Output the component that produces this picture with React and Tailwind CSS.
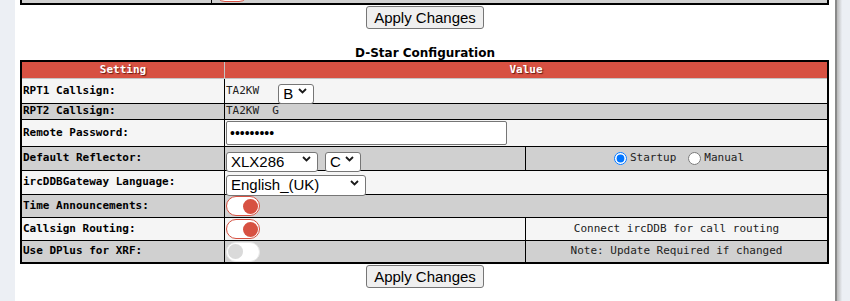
import { useState } from 'react';

const mono = "font-['DejaVu_Sans_Mono',monospace] text-[11px]";

const Chevron = () => (
  <svg width="9" height="6" viewBox="0 0 9 6" className="pointer-events-none absolute right-[7px] top-1/2 -translate-y-1/2">
    <path d="M1 1l3.5 3.5L8 1" fill="none" stroke="#1a1a1a" strokeWidth="1.8" />
  </svg>
);

const Select = ({ value, options, className }) => (
  <div className={`relative ${className}`}>
    <select
      defaultValue={value}
      className="h-full w-full appearance-none rounded-[3px] border border-[#767676] bg-white py-0 pl-[4px] font-['Liberation_Sans',sans-serif] text-[15px] leading-[18px] text-black outline-none"
    >
      {options.map((o) => (
        <option key={o}>{o}</option>
      ))}
    </select>
    <Chevron />
  </div>
);

const Toggle = ({ on }) =>
  on ? (
    <div className="ml-[1px] flex h-[20px] w-[34px] items-center justify-end rounded-full border-[1.5px] border-[#d75142] bg-white px-[1px]">
      <div className="h-[15px] w-[15px] rounded-full bg-[#d75142]" />
    </div>
  ) : (
    <div className="ml-[1px] flex h-[20px] w-[34px] items-center justify-start rounded-full border border-[#e8e8e8] bg-white px-[1px]">
      <div className="h-[15px] w-[15px] rounded-full bg-[#dadada]" />
    </div>
  );

const Row = ({ h, bg, label, children, top = true }) => (
  <div className={`flex ${h} ${bg} ${top ? 'border-t border-black' : ''}`}>
    <div className={`flex w-[202px] items-center pl-[1px] font-bold text-black ${mono}`}>{label}</div>
    <div className="flex flex-1 items-center border-l border-black">{children}</div>
  </div>
);

const ApplyButton = () => (
  <div className="flex justify-center">
    <button className="h-[23px] w-[118px] rounded-[3px] border border-[#767676] bg-[#efefef] font-['Liberation_Sans',sans-serif] text-[15px] leading-none text-black">
      Apply Changes
    </button>
  </div>
);

export default function App() {
  const [mode, setMode] = useState('startup');

  return (
    <div className="flex h-[301px] w-[850px] overflow-hidden bg-white">
      <div className="w-[15px] bg-[#eceff4]" />

      <div className="flex w-[820px] flex-col">
        {/* tail of the previous table */}
        <div className="ml-[5px] flex h-[5px] w-[809px] border-x-2 border-b-2 border-black bg-[#d0d0d0]">
          <div className="w-[189px]" />
          <div className="h-[3px] flex-1 overflow-hidden border-l border-black">
            <div className="-mt-[18px] ml-[3px] h-[20px] w-[34px] rounded-full border-[1.5px] border-[#d75142] bg-white" />
          </div>
        </div>

        <div className="mt-[1px]">
          <ApplyButton />
        </div>

        <div className="flex h-[31px] items-end justify-center">
          <span className="font-['DejaVu_Sans',sans-serif] text-[12px] font-bold leading-[14px] text-black">
            D-Star Configuration
          </span>
        </div>

        <div className="ml-[5px] w-[809px] border-2 border-black">
          <div className="flex h-[17px] border-b border-[#c4c4c4] bg-[#d75142] font-bold text-white [text-shadow:1px_1px_1px_#6b1a12]">
            <div className={`flex w-[202px] items-center justify-center ${mono}`}>Setting</div>
            <div className={`flex flex-1 items-center justify-center border-l border-[#c4c4c4] ${mono}`}>Value</div>
          </div>

          <Row h="h-[24px]" bg="bg-[#f5f5f5]" label="RPT1 Callsign:" top={false}>
            <span className={`ml-[1px] text-[#222] ${mono}`}>TA2KW</span>
            <Select value="B" options={['A', 'B', 'C', 'D', 'E']} className="ml-[19px] h-[20px] w-[36px]" />
          </Row>

          <Row h="h-[16px]" bg="bg-[#d0d0d0]" label="RPT2 Callsign:">
            <span className={`ml-[1px] whitespace-pre text-[#222] ${mono}`}>TA2KW  G</span>
          </Row>

          <Row h="h-[27px]" bg="bg-[#f5f5f5]" label="Remote Password:">
            <input
              type="password"
              defaultValue="raspberry"
              className="ml-[1px] h-[24px] w-[281px] rounded-[2px] border border-[#767676] bg-white px-[3px] font-['Liberation_Sans',sans-serif] text-[14px] text-black outline-none"
            />
          </Row>

          <Row h="h-[24px]" bg="bg-[#d0d0d0]" label="Default Reflector:">
            <div className="flex h-full w-[300px] items-center">
              <Select value="XLX286" options={['REF001', 'XLX286', 'DCS006']} className="ml-[1px] h-[20px] w-[92px]" />
              <Select value="C" options={['A', 'B', 'C', 'D']} className="ml-[7px] h-[20px] w-[36px]" />
            </div>
            <div className={`flex h-full flex-1 items-center justify-center border-l border-black text-[#222] ${mono}`}>
              <input
                type="radio"
                name="refmode"
                checked={mode === 'startup'}
                onChange={() => setMode('startup')}
                className="mr-[3px] ml-[5px] h-[13px] w-[13px]"
              />
              <span>Startup</span>
              <input
                type="radio"
                name="refmode"
                checked={mode === 'manual'}
                onChange={() => setMode('manual')}
                className="mr-[3px] ml-[12px] h-[13px] w-[13px]"
              />
              <span>Manual</span>
            </div>
          </Row>

          <Row h="h-[24px]" bg="bg-[#f5f5f5]" label="ircDDBGateway Language:">
            <Select value="English_(UK)" options={['English_(UK)', 'English_(US)', 'Deutsch']} className="ml-[1px] h-[21px] w-[140px]" />
          </Row>

          <Row h="h-[23px]" bg="bg-[#d0d0d0]" label="Time Announcements:">
            <Toggle on />
          </Row>

          <Row h="h-[23px]" bg="bg-[#f5f5f5]" label="Callsign Routing:">
            <div className="flex h-full w-[300px] items-center">
              <Toggle on />
            </div>
            <div className={`flex h-full flex-1 items-center justify-center border-l border-black text-[#222] ${mono}`}>
              Connect ircDDB for call routing
            </div>
          </Row>

          <Row h="h-[22px]" bg="bg-[#d0d0d0]" label="Use DPlus for XRF:">
            <div className="flex h-full w-[300px] items-center">
              <Toggle on={false} />
            </div>
            <div className={`flex h-full flex-1 items-center justify-center border-l border-black text-[#222] ${mono}`}>
              Note: Update Required if changed
            </div>
          </Row>
        </div>

        <div className="mt-[1px]">
          <ApplyButton />
        </div>
      </div>

      <div className="w-[15px] border-l-2 border-[#8a8a8a] bg-linear-to-r from-[#b8b8b8] via-[#eceff4] via-40% to-[#eceff4]" />
    </div>
  );
}
